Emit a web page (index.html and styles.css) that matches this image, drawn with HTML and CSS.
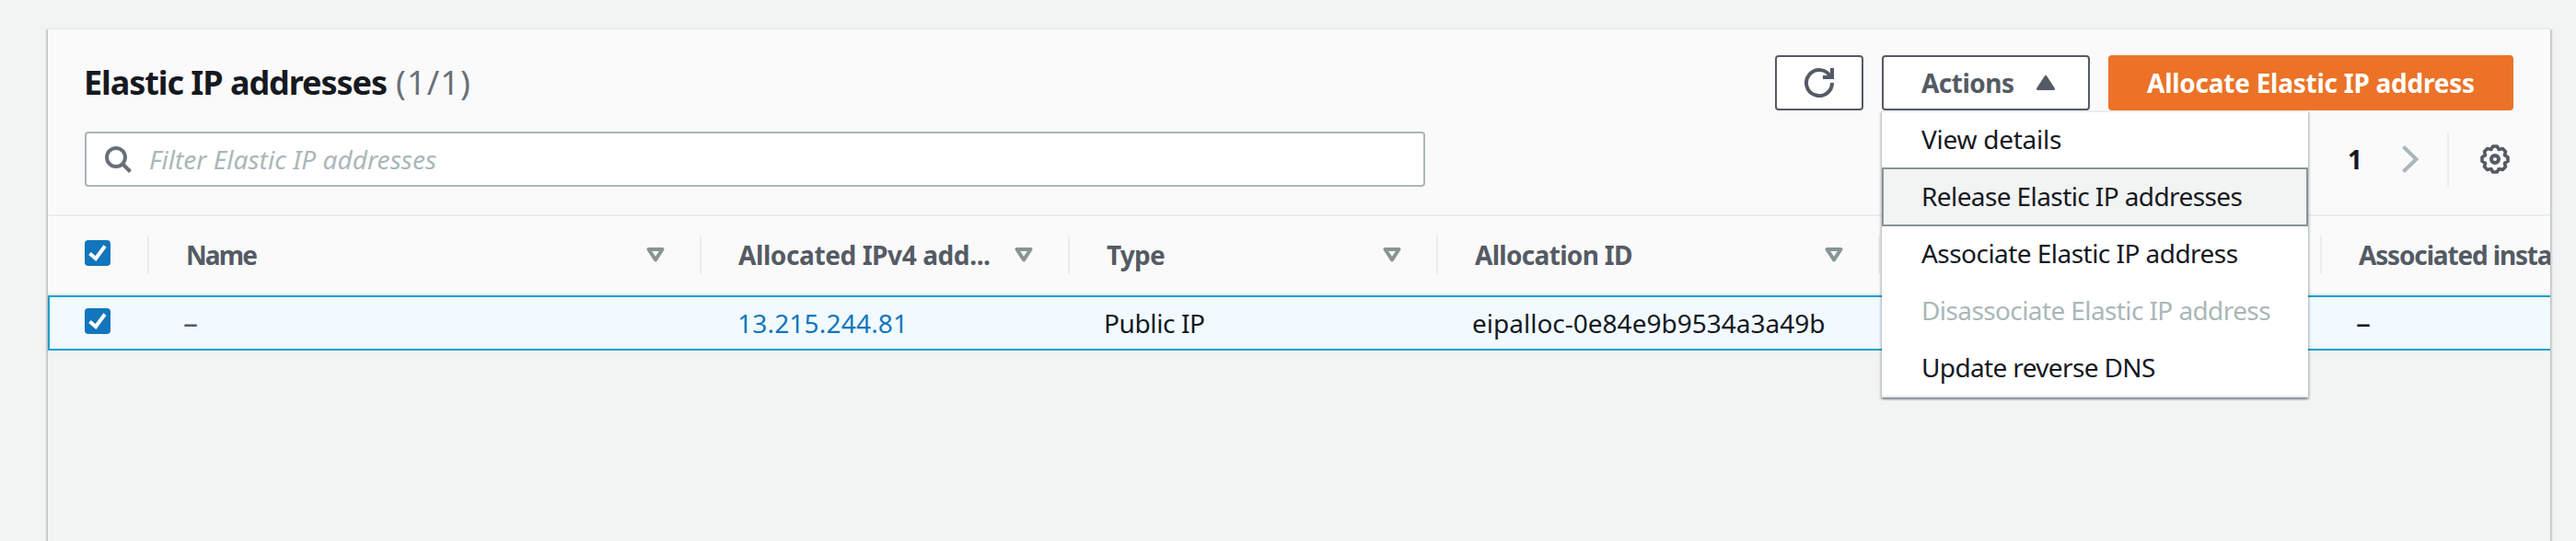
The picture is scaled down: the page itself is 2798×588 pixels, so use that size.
FILE: index.html
```
<!DOCTYPE html>
<html lang="en">
<head>
<meta charset="utf-8">
<title>Elastic IP addresses</title>
<link rel="stylesheet" href="styles.css">
</head>
<body>
<svg class="defs" aria-hidden="true">
  <symbol id="sort" viewBox="0 0 20 16"><path d="M2.5 2h15L10 13.3z" fill="none" stroke="#879596" stroke-width="4" stroke-linejoin="round"/></symbol>
  <symbol id="check" viewBox="0 0 28 28"><path d="M5.5 14.500l6.500 5.500L22 6.500" fill="none" stroke="#fff" stroke-width="4"/></symbol>
</svg>
<main class="panel">
  <header class="panel-head">
    <div class="title-row">
      <h1 class="title">Elastic IP addresses</h1>
      <span class="count">(1/1)</span>
      <div class="buttons">
        <button class="btn btn-refresh" aria-label="Refresh">
          <svg width="32" height="32" viewBox="0 0 32 32" fill="none" stroke="#545b64" stroke-width="4"><path d="M30 16A14 14 0 1 1 28.200 9.200M30 0V10H20"/></svg>
        </button>
        <div class="dropdown">
          <button class="btn btn-actions"><span class="t-actions">Actions</span>
            <svg width="20" height="16" viewBox="0 0 20 16"><path d="M10 1.500L18.500 14.500H1.500z" fill="#545b64" stroke="#545b64" stroke-width="3" stroke-linejoin="round"/></svg>
          </button>
          <ul class="menu">
            <li class="item t-view">View details</li>
            <li class="item active">Release Elastic IP addresses</li>
            <li class="item t-associate">Associate Elastic IP address</li>
            <li class="item disabled">Disassociate Elastic IP address</li>
            <li class="item t-update">Update reverse DNS</li>
          </ul>
        </div>
        <button class="btn btn-primary">Allocate Elastic IP address</button>
      </div>
    </div>
    <div class="tools-row">
      <div class="search">
        <svg width="32" height="32" viewBox="0 0 32 32" fill="none" stroke="#687078" stroke-width="4"><circle cx="14" cy="14" r="10"/><path d="M21 21l8.500 8.500"/></svg>
        <span class="placeholder">Filter Elastic IP addresses</span>
      </div>
      <div class="pager">
        <span class="page">1</span>
        <svg class="next" width="20" height="32" viewBox="0 0 20 32" fill="none" stroke="#aab7b8" stroke-width="4"><path d="M2.500 2.500L16.500 16L2.500 29.500"/></svg>
        <span class="divider"></span>
        <svg width="32" height="32" viewBox="0 0 32 32" fill="none" stroke="#545b64" stroke-width="3.6" stroke-linejoin="round"><g transform="translate(16 16)"><circle r="4" stroke-width="4"/><path d="M-2.200-14H2.200L4.300-10.500L8.300-11.500L11.500-8.300L10.500-4.300L14-2.200V2.200L10.500 4.300L11.500 8.300L8.300 11.500L4.300 10.500L2.200 14H-2.200L-4.300 10.500L-8.300 11.500L-11.500 8.300L-10.500 4.300L-14 2.200V-2.200L-10.500-4.300L-11.500-8.300L-8.300-11.500L-4.300-10.500z"/></g></svg>
      </div>
    </div>
  </header>
  <div class="grid thead">
    <div class="pick"><span class="box"><svg width="28" height="28"><use href="#check"/></svg></span></div>
    <div class="th"><span class="t-name">Name</span><svg width="20" height="16"><use href="#sort"/></svg></div>
    <div class="th"><span class="t-ipv4">Allocated IPv4 add...</span><svg width="20" height="16"><use href="#sort"/></svg></div>
    <div class="th"><span class="t-type">Type</span><svg width="20" height="16"><use href="#sort"/></svg></div>
    <div class="th"><span class="t-alloc">Allocation ID</span><svg width="20" height="16"><use href="#sort"/></svg></div>
    <div class="th"></div>
    <div class="th"><span class="t-assoc">Associated insta</span></div>
  </div>
  <div class="grid row">
    <div class="pick"><span class="box"><svg width="28" height="28"><use href="#check"/></svg></span></div>
    <div class="td dash muted">–</div>
    <div class="td link">13.215.244.81</div>
    <div class="td t-public">Public IP</div>
    <div class="td t-id">eipalloc-0e84e9b9534a3a49b</div>
    <div class="td"></div>
    <div class="td dash">–</div>
  </div>
</main>
</body>
</html>
```
FILE: styles.css
```
* { box-sizing: border-box; }
body {
  margin: 0;
  height: 588px;
  overflow: hidden;
  padding: 30px 28px 0 52px;
  background: #f2f3f3;
  color: #16191f;
  font: 28px/40px "Noto Sans", "Open Sans", sans-serif;
  white-space: nowrap;
}
.defs { position: absolute; width: 0; height: 0; }
svg { display: block; flex: none; }

.panel {
  height: 558px;
  border-top: 2px solid #eaeded;
  box-shadow: 0 2px 2px rgba(0, 28, 36, .3), 2px 2px 2px rgba(0, 28, 36, .15), -2px 2px 2px rgba(0, 28, 36, .15);
  background: #f2f3f3;
}
.panel-head {
  height: 203px;
  padding: 28px 40px 0;
  border-bottom: 2px solid #eaeded;
  background: #fafafa;
}

.title-row { display: flex; align-items: center; height: 60px; }
.title {
  margin: 0 0 0 -1px;
  font-size: 36px;
  font-weight: 700;
  letter-spacing: -1.06px;
}
.count { margin-left: 10px; font-size: 36px; letter-spacing: 1.16px; color: #687078; }
.buttons { display: flex; gap: 20px; margin-left: auto; }

.btn {
  display: flex;
  align-items: center;
  height: 60px;
  padding: 0;
  border: 2px solid #545b64;
  border-radius: 4px;
  background: #fff;
  color: #545b64;
  font: 700 28px/40px "Noto Sans", "Open Sans", sans-serif;
}
.btn-refresh { width: 96px; justify-content: center; }
.btn-actions { width: 226px; justify-content: space-between; padding: 0 36px 0 41px; }
.t-actions { letter-spacing: -.51px; padding-bottom: 1px; }
.btn-primary {
  width: 440px;
  padding: 0 0 1px 40px;
  border-color: #eb7227;
  background: #eb7227;
  color: #fff;
  letter-spacing: -.25px;
}

.dropdown { position: relative; }
.menu {
  position: absolute;
  top: 60px;
  left: 0;
  z-index: 2;
  width: 463px;
  margin: 0;
  padding: 0;
  list-style: none;
  background: #fff;
  border: solid #eaeded;
  border-width: 2px 0;
  box-shadow: 0 2px 2px rgba(0, 28, 36, .3), 2px 2px 2px rgba(0, 28, 36, .15), -2px 2px 2px rgba(0, 28, 36, .15);
}
.item {
  height: 64px;
  margin-top: -2px;
  padding: 9px 0 0 41px;
  border: 2px solid transparent;
  letter-spacing: -.6px;
}
.item:last-child { margin-bottom: -2px; }
.item.active { background: #f2f3f3; border-color: #879596; }
.item.disabled { color: #aab7b8; }
.t-view { letter-spacing: -.26px; }
.t-associate { letter-spacing: -.54px; }
.t-update { letter-spacing: -.64px; }

.tools-row { display: flex; justify-content: space-between; margin-top: 23px; }
.search {
  display: flex;
  align-items: center;
  width: 1456px;
  height: 60px;
  padding-left: 18px;
  border: 2px solid #aab7b8;
  border-radius: 4px;
  background: #fff;
}
.placeholder { margin-left: 18px; font-style: italic; letter-spacing: .04px; color: #aab7b8; }
.pager { display: flex; align-items: center; padding-right: 4px; }
.page { font-weight: 700; }
.next { margin-left: 42px; }
.divider { width: 2px; height: 60px; margin: 0 34px 0 30px; background: #eaeded; }

.grid { display: grid; grid-template-columns: 108px 600px 400px 400px 480px 480px 250px; overflow: hidden; }
.thead {
  height: 86px;
  border-bottom: 2px solid #eaeded;
  background: #fafafa;
  color: #545b64;
  font-weight: 700;
}
.pick { display: flex; align-items: center; padding: 0 0 4px 40px; }
.box { border-radius: 4px; background: #1176bb; }
.th {
  display: flex;
  align-items: center;
  justify-content: space-between;
  height: 42px;
  margin-top: 21px;
  padding: 0 38px 0 40px;
  border-left: 2px solid #eaeded;
}
.th span { padding-bottom: 1px; }
.th:last-child { padding-right: 0; overflow: hidden; }
.t-name { letter-spacing: -1.9px; }
.t-ipv4 { letter-spacing: -.4px; }
.t-type { letter-spacing: -.76px; }
.t-alloc { letter-spacing: -.68px; }
.t-assoc { letter-spacing: -1.16px; }

.row { height: 60px; border: 2px solid #19a2c9; border-right: 0; background: #f1faff; }
.row .pick { padding-left: 38px; }
.grid.row { grid-template-columns: 106px 600px 400px 400px 480px 480px 250px; }
.td { display: flex; align-items: center; padding: 0 0 1px 40px; }
.t-public, .t-id { padding-left: 39px; }
.t-public { letter-spacing: -.39px; }
.link { padding-left: 41px; color: #1176bb; letter-spacing: .2px; }
.dash { padding-left: 39px; font-size: 32px; }
.muted { color: #545b64; }
```
